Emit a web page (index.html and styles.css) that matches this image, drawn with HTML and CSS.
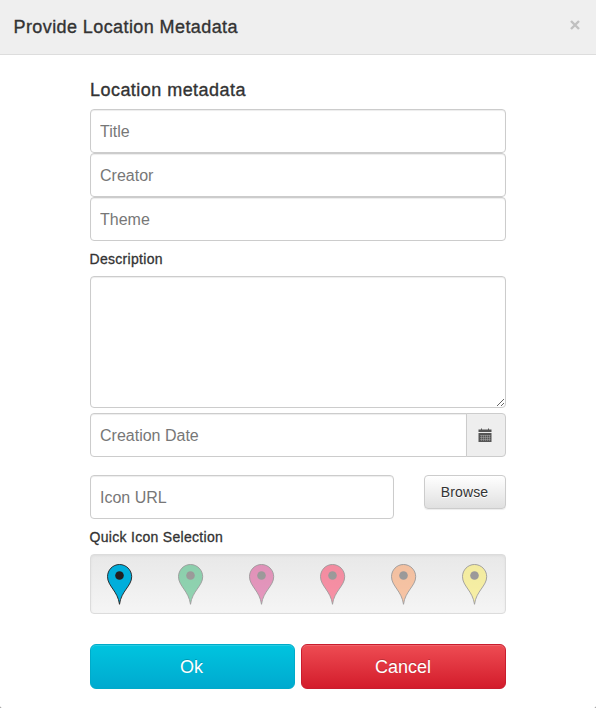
FILE: index.html
```html
<!DOCTYPE html>
<html lang="en">
<head>
<meta charset="utf-8">
<title>Provide Location Metadata</title>
<link rel="stylesheet" href="styles.css">
</head>
<body>
<svg class="defs" width="0" height="0" aria-hidden="true">
  <symbol id="pin" viewBox="0 0 26 41">
    <path d="M12.500 .5C5.800 .5.500 6 .5 12.700C.5 22 10.800 27 12.500 40.300C14.200 27 24.700 22 24.700 12.700C24.700 6 19.200 .5 12.500 .5Z" stroke="#231f20" stroke-width=".9"/>
    <circle cx="12.500" cy="11.500" r="4.300" fill="#231f20"/>
  </symbol>
</svg>
<div class="modal">
  <header class="modal-header">
    <h3 class="title">Provide Location Metadata</h3>
    <button class="close" type="button" aria-label="Close"><svg width="10" height="10" viewBox="0 0 10 10"><path d="M1 1L9 9M9 1L1 9" stroke="#c0c0c0" stroke-width="2.400"/></svg></button>
  </header>
  <form class="form">
    <h4 class="legend">Location metadata</h4>
    <input class="field" type="text" placeholder="Title">
    <input class="field" type="text" placeholder="Creator">
    <input class="field" type="text" placeholder="Theme">
    <label class="label" for="description">Description</label>
    <textarea class="field area" id="description"></textarea>
    <div class="date">
      <input class="field date-input" type="text" placeholder="Creation Date">
      <span class="addon"><svg width="14" height="14" viewBox="0 0 14 14"><path fill="#555" d="M.5 1.500H3V.5H4V1.500H10V.5H11V1.500H13.500V4H.5ZM.5 5H13.500V14H.5Z"/><path d="M2 7.500H12.500M2 9.500H12.500M2 11.500H12.500M3.500 7V13M5.500 7V13M7.500 7V13M9.500 7V13M11.500 7V13" stroke="#aaa" stroke-width=".5"/></svg></span>
    </div>
    <div class="url-row">
      <input class="field url" type="text" placeholder="Icon URL">
      <button class="browse" type="button">Browse</button>
    </div>
    <div class="label">Quick Icon Selection</div>
    <div class="icons">
      <svg class="pin blue selected"><use href="#pin"/></svg>
      <svg class="pin green"><use href="#pin"/></svg>
      <svg class="pin pink"><use href="#pin"/></svg>
      <svg class="pin red"><use href="#pin"/></svg>
      <svg class="pin orange"><use href="#pin"/></svg>
      <svg class="pin yellow"><use href="#pin"/></svg>
    </div>
    <div class="actions">
      <button class="action ok" type="button">Ok</button>
      <button class="action cancel" type="button">Cancel</button>
    </div>
  </form>
</div>
</body>
</html>
```
FILE: styles.css
```css
* { box-sizing: border-box; }
body {
  margin: 0;
  background: #808080;
  color: #333;
  font-family: "Liberation Sans", Arial, sans-serif;
  overflow: hidden;
}
input, textarea, button { font-family: inherit; margin: 0; }
.defs { display: block; }
.modal {
  height: 708px;
  background: #fff;
  border-radius: 0 0 2px 2px;
}
.modal-header {
  display: flex;
  justify-content: space-between;
  align-items: flex-start;
  height: 55px;
  padding: 0 16px 0 13.5px;
  background: #efefef;
  border-bottom: 1px solid #ddd;
}
.title, .legend {
  margin: 0;
  font-size: 18px;
  font-weight: 400;
  -webkit-text-stroke: .35px #333;
  white-space: nowrap;
}
.title { line-height: 54px; letter-spacing: .41px; }
.close {
  display: flex;
  padding: 0;
  margin-top: 20px;
  border: 0;
  background: none;
}
.form {
  display: flex;
  flex-direction: column;
  width: 416px;
  margin: 0 auto;
  padding-top: 23px;
}
.legend { line-height: 24px; margin-bottom: 7px; letter-spacing: .46px; }
.field {
  display: block;
  width: 100%;
  height: 44px;
  padding: 1px 9px 0;
  border: 1px solid #ccc;
  border-radius: 4px;
  background: #fff;
  box-shadow: inset 0 1px 1px rgba(0, 0, 0, .075);
  font-size: 16px;
  outline: 0;
}
.field::placeholder { color: #777; opacity: 1; }
.label {
  height: 35px;
  line-height: 36px;
  font-size: 14px;
  letter-spacing: .3px;
  text-indent: -.5px;
  -webkit-text-stroke: .3px #333;
}
.area { height: 132px; resize: vertical; }
.date { display: flex; margin: 5px 0 18px; }
.date-input { width: 377px; border-radius: 4px 0 0 4px; }
.addon {
  display: flex;
  align-items: center;
  justify-content: center;
  width: 40px;
  height: 44px;
  margin-left: -1px;
  padding-right: 2px;
  border: 1px solid #ccc;
  border-radius: 0 4px 4px 0;
  background: #eee;
}
.url-row { display: flex; justify-content: space-between; }
.url { width: 304px; }
.browse {
  width: 82px;
  height: 34px;
  padding: 0 1px 0 0;
  border: 1px solid #ccc;
  border-radius: 4px;
  background: linear-gradient(#fff, #e0e0e0);
  box-shadow: inset 0 1px 0 rgba(255, 255, 255, .15), 0 1px 1px rgba(0, 0, 0, .075);
  color: #333;
  font-size: 14px;
  letter-spacing: .1px;
  text-shadow: 0 1px 0 #fff;
}
.icons {
  display: flex;
  justify-content: space-between;
  height: 60px;
  padding: 9px 17px 0 16px;
  border: 1px solid #dcdcdc;
  border-radius: 4px;
  background: linear-gradient(#e8e8e8, #f5f5f5);
  box-shadow: inset 0 1px 3px rgba(0, 0, 0, .05);
}
.pin { width: 26px; height: 41px; opacity: .4; }
.selected { opacity: 1; }
.blue { fill: #00aedb; }
.green { fill: #00a651; }
.pink { fill: #d1106f; }
.red { fill: #ff0033; }
.orange { fill: #ff8133; }
.yellow { fill: #ffec33; }
.actions { display: flex; gap: 6px; margin-top: 30px; }
.action {
  width: 205px;
  height: 45px;
  padding: 2px 2px 0 0;
  border: 1px solid #00abc9;
  border-radius: 6px;
  color: #fff;
  font-size: 18px;
  text-shadow: 0 -1px 0 rgba(0, 0, 0, .2);
  box-shadow: inset 0 1px 0 rgba(255, 255, 255, .15);
}
.ok { background: linear-gradient(#00c4df, #00aacf); }
.cancel { padding-right: 1px; border-color: #c91d2e; background: linear-gradient(#ee4c53, #d31c2b); }
```
